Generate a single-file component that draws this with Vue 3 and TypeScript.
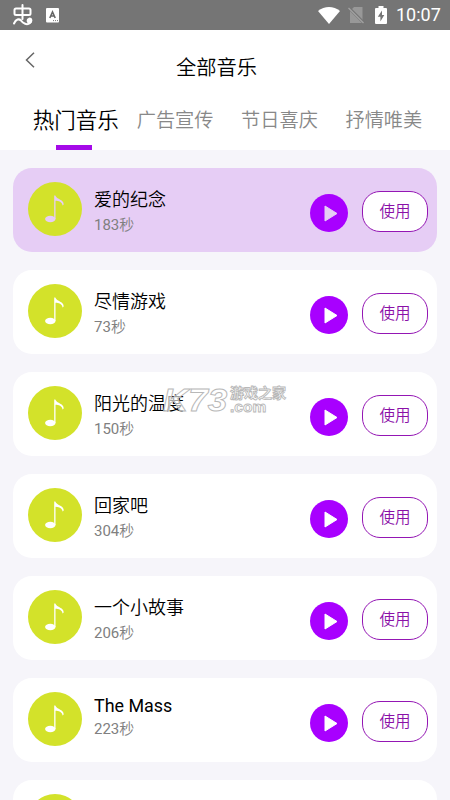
<script setup lang="ts">
import { ref } from 'vue'

interface Song {
  name: string
  seconds: number
  latin?: boolean
}

const tabs: string[] = ['热门音乐', '广告宣传', '节日喜庆', '抒情唯美']
const activeTab = ref(0)
const selected = ref(0)

const songs: Song[] = [
  { name: '爱的纪念', seconds: 183 },
  { name: '尽情游戏', seconds: 73 },
  { name: '阳光的温度', seconds: 150 },
  { name: '回家吧', seconds: 304 },
  { name: '一个小故事', seconds: 206 },
  { name: 'The Mass', seconds: 223, latin: true },
  { name: '', seconds: 0 },
]
</script>

<template>
  <div class="screen">
    <div class="status">
      <svg class="bug" viewBox="0 0 20 22" width="20" height="22">
        <g fill="none" stroke="#fff" stroke-width="2" stroke-linecap="round" stroke-linejoin="round">
          <rect x="1.500" y="4.500" width="16" height="6.500" rx="1.500" />
          <path d="M9.500 1V15M1 19.500C3 15 6 14.500 8 16.500C10 19.500 14 21.500 17 19C19.200 17 18.500 14.500 16.500 14.500" />
        </g>
        <circle cx="16.300" cy="16.700" r="2.600" fill="#fff" />
      </svg>
      <svg class="input" viewBox="0 0 13 15" width="13" height="15">
        <rect width="13" height="14.500" rx="1" fill="#fff" />
        <path d="M3.800 10L6.500 4L9.200 10M4.800 8H8.200" fill="none" stroke="#666" stroke-width="1.600" />
        <path d="M7 12.600H12" stroke="#777" stroke-width="1" stroke-dasharray="1 1" />
      </svg>
      <div class="status-right">
        <svg class="wifi" viewBox="0 0 22 17" width="22" height="17">
          <path d="M0 4C6.500 -1.300 15.500 -1.300 22 4L11 17Z" fill="#fff" />
        </svg>
        <svg class="sim" viewBox="0 0 17 18" width="17" height="18">
          <path d="M6 1H14.500V17H2V5Z" fill="#989898" />
          <path d="M0 1L16 17" stroke="#757575" stroke-width="3" />
          <path d="M0.500 2L15.500 17" stroke="#a2a2a2" stroke-width="1.300" />
        </svg>
        <svg class="battery" viewBox="0 0 12 18" width="12" height="18">
          <path d="M3.500 0H8.500V2H11Q12 2 12 3V17Q12 18 11 18H1Q0 18 0 17V3Q0 2 1 2H3.500Z" fill="#fff" />
          <path d="M7 4.500L2.800 10.800H5.400V15.500L9.300 9H7Z" fill="#757575" />
        </svg>
        <span class="clock">10:07</span>
      </div>
    </div>

    <header class="header">
      <svg class="back" viewBox="0 0 10 16" width="10" height="16">
        <path d="M9 0.700L1.500 8L9 15.300" fill="none" stroke="#666" stroke-width="1.500" />
      </svg>
      <h1 class="title">全部音乐</h1>
    </header>

    <nav class="tabs">
      <button
        v-for="(tab, i) in tabs"
        :key="tab"
        class="tab"
        :class="{ active: i === activeTab }"
        @click="activeTab = i"
      >
        <span>{{ tab }}</span>
      </button>
    </nav>

    <main class="list">
      <section
        v-for="(song, i) in songs"
        :key="i"
        class="card"
        :class="{ selected: i === selected }"
        @click="selected = i"
      >
        <div class="cover">
          <svg viewBox="0 0 20 28" width="20" height="28">
            <ellipse cx="5.300" cy="24" rx="5.200" ry="3.200" fill="currentColor" />
            <path d="M9.200 0.500H10.300C11.500 4.500 19.500 4.500 18.600 9.800L17.500 10.500C17.300 7 13.500 5.800 10.500 5.800V24H9.200Z" fill="currentColor" />
          </svg>
        </div>
        <div class="info">
          <div class="name" :class="{ latin: song.latin }">{{ song.name }}</div>
          <div v-if="song.seconds" class="time"><span class="digits">{{ song.seconds }}</span>秒</div>
        </div>
        <div class="play">
          <svg viewBox="0 0 14 17" width="14" height="17">
            <path d="M1 1L13 8.500L1 16Z" fill="currentColor" stroke="currentColor" stroke-width="1" stroke-linejoin="round" />
          </svg>
        </div>
        <button v-if="song.seconds" class="use">使用</button>
      </section>
    </main>

    <div class="watermark">
      <span class="mark-logo">K73</span>
      <span class="mark-cn">游戏之家</span>
      <span class="mark-com">.com</span>
    </div>
  </div>
</template>

<style>
body {
  overflow: hidden;
}
</style>

<style scoped>
.screen {
  position: relative;
  width: 450px;
  height: 800px;
  overflow: hidden;
  background: #f6f5fa;
  font-family: Roboto, 'Noto Sans CJK SC', sans-serif;
  font-weight: 350;
  color: #000;
}
button {
  font-family: inherit;
  font-weight: inherit;
  padding: 0;
  margin: 0;
  background: none;
  border: 0;
}
svg {
  display: block;
  flex: none;
}
.status {
  display: flex;
  align-items: center;
  height: 30px;
  padding: 0 10px 0 13px;
  box-sizing: border-box;
  background: #757575;
}
.input {
  margin-left: 13px;
}
.status-right {
  display: flex;
  align-items: center;
  margin-left: auto;
}
.sim {
  margin-left: 8px;
}
.battery {
  margin-left: 10px;
}
.clock {
  margin-left: 9px;
  color: #fff;
  font-size: 18px;
  font-weight: 400;
  line-height: 32px;
  width: 44px;
  white-space: nowrap;
}
.header {
  display: flex;
  height: 66px;
  padding-left: 25px;
  box-sizing: border-box;
  background: #fff;
}
.back {
  margin-top: 22px;
}
.title {
  margin: 23px 0 0 141px;
  font-size: 20.300px;
  line-height: 30px;
  font-weight: 350;
}
.tabs {
  display: flex;
  height: 54px;
  padding-left: 22px;
  background: #fff;
}
.tab {
  display: flex;
  justify-content: center;
  width: 104.400px;
  color: #888;
  font-size: 19.200px;
  line-height: 50px;
  white-space: nowrap;
  position: relative;
}
.tab:not(.active) span {
  margin-right: 7px;
}
.tab.active {
  color: #000;
  font-size: 21.500px;
}
.tab.active span {
  margin-left: 3px;
}
.tab.active::after {
  content: '';
  position: absolute;
  left: 34px;
  bottom: 0;
  width: 36px;
  height: 5px;
  background: #a50ae8;
}
.list {
  display: flex;
  flex-direction: column;
  gap: 18px;
  padding: 18px 13px 0;
}
.card {
  display: flex;
  flex: none;
  height: 84px;
  padding: 0 9px 0 15px;
  box-sizing: border-box;
  border-radius: 19px;
  background: #fff;
  color: #fff;
}
.card.selected {
  background: #e6cdf5;
  color: #e6cdf5;
}
.cover {
  display: flex;
  align-items: center;
  justify-content: center;
  width: 54px;
  height: 54px;
  margin-top: 14.400px;
  border-radius: 50%;
  background: #d3e22a;
}
.info {
  flex: 1;
  margin: 19px 0 0 12px;
}
.name {
  height: 26px;
  line-height: 26px;
  font-size: 18px;
  color: #000;
}
.name.latin {
  height: 20px;
  line-height: 17px;
  font-size: 17.900px;
  font-weight: 400;
}
.time {
  height: 24px;
  line-height: 24px;
  font-size: 15px;
  color: #808080;
}
.digits {
  font-weight: 400;
}
.play {
  display: flex;
  align-items: center;
  justify-content: center;
  width: 38px;
  height: 38px;
  margin: 26.400px 80px 0 0;
  padding-left: 3px;
  box-sizing: border-box;
  border-radius: 50%;
  background: #a800ff;
}
.play:has(+ .use) {
  margin-right: 0;
}
.use {
  width: 66px;
  height: 41px;
  margin: 23px 0 0 14px;
  padding-top: 1px;
  box-sizing: border-box;
  border: 1.500px solid #9416b4;
  border-radius: 18px;
  background: #fff;
  color: #8a10a8;
  font-size: 15.500px;
  line-height: 38px;
}
.watermark {
  position: absolute;
  left: 163px;
  top: 385px;
  display: grid;
  grid-template-columns: 67px 58px;
  grid-template-rows: 15px 15px;
  color: rgba(255, 255, 255, 0.650);
  -webkit-text-stroke: 0.900px #b8b8b8;
  white-space: nowrap;
}
.mark-logo {
  grid-row: 1 / 3;
  font: italic 700 31px/31px 'Liberation Sans', sans-serif;
  transform: scaleX(1.130);
  transform-origin: 0 50%;
}
.mark-cn {
  font-size: 14px;
  line-height: 17px;
  font-weight: 700;
}
.mark-com {
  font: 700 15.500px/13px 'Liberation Sans', sans-serif;
}
</style>
